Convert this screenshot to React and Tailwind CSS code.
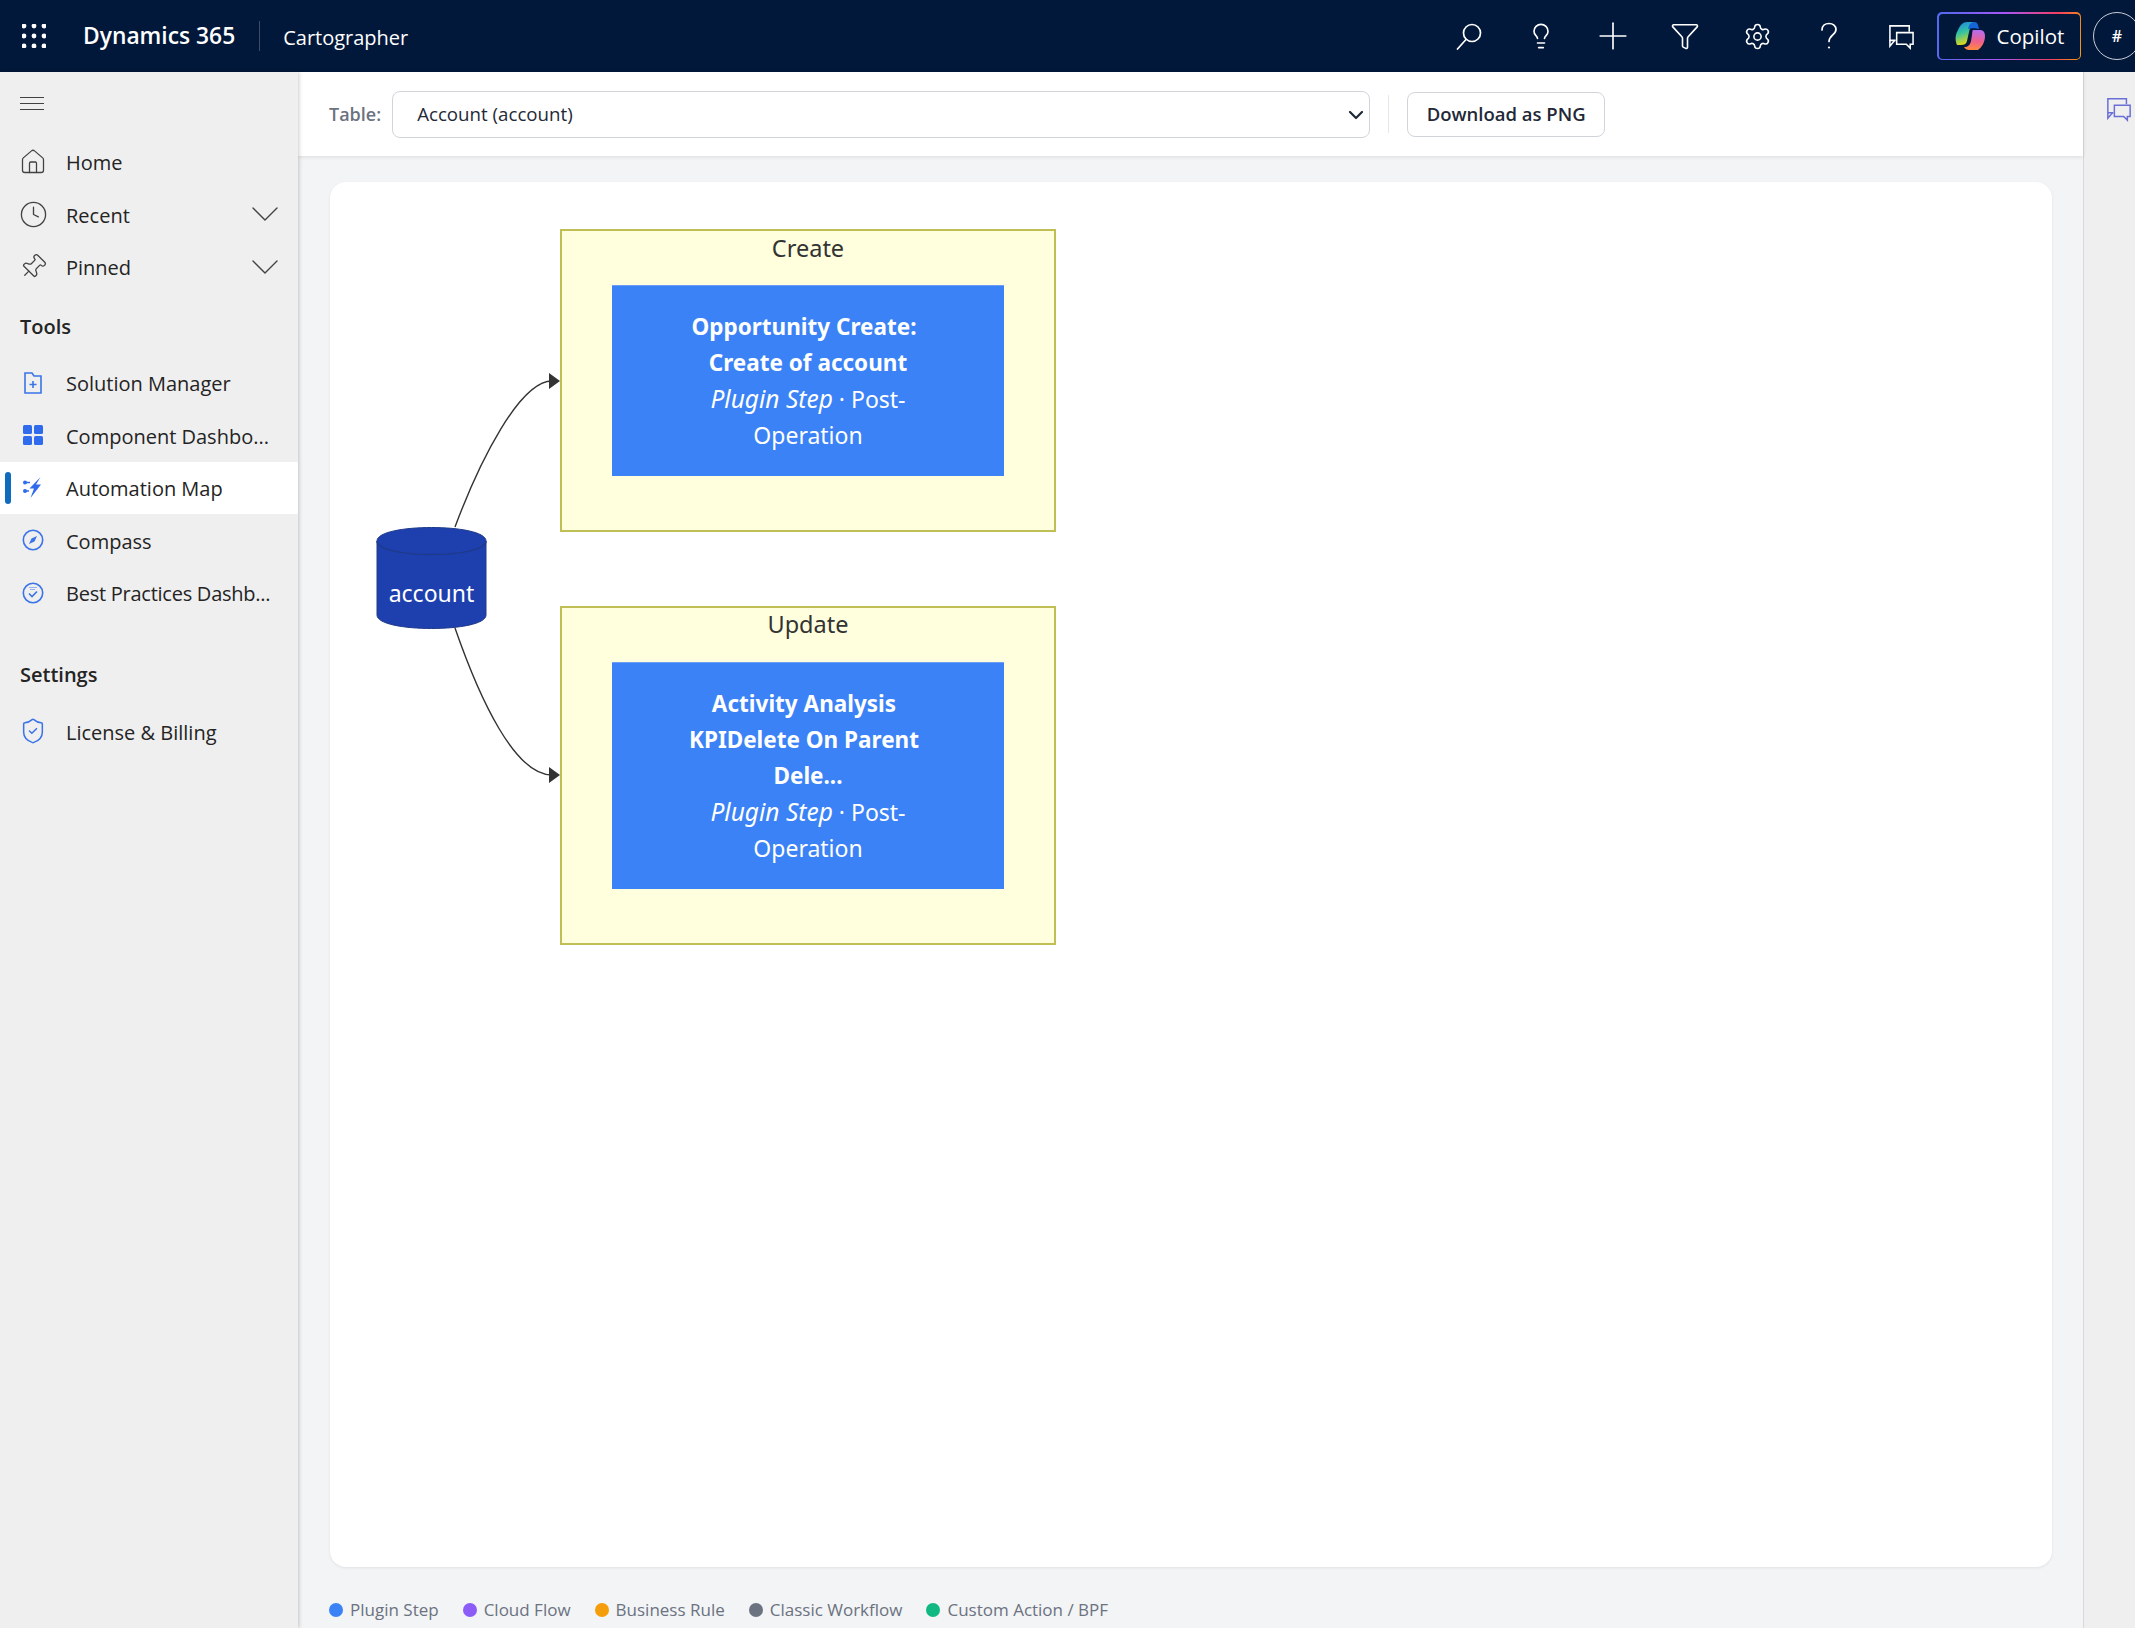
import { House, Clock, Pin, ChevronDown, Lightbulb, Plus, Funnel, Settings, ShieldCheck } from "lucide-react";

const LEGEND = [
  { label: "Plugin Step", dot: "bg-[#3b82f6]" },
  { label: "Cloud Flow", dot: "bg-[#8b5cf6]" },
  { label: "Business Rule", dot: "bg-[#f59e0b]" },
  { label: "Classic Workflow", dot: "bg-[#6b7280]" },
  { label: "Custom Action / BPF", dot: "bg-[#10b981]" },
];

const Waffle = () => (
  <svg width="24" height="24" viewBox="0 0 24 24" fill="white">
    {[2, 12, 22].map((y) =>
      [2, 12, 22].map((x) => <circle key={`${x}-${y}`} cx={x} cy={y} r="2.4" />)
    )}
  </svg>
);

const SearchIcon = () => (
  <svg width="28" height="28" viewBox="0 0 28 28" fill="none" stroke="white" strokeWidth="1.7">
    <circle cx="17" cy="11" r="8.5" />
    <path d="M11 17.5 2.5 27" strokeLinecap="round" />
  </svg>
);

const QuestionIcon = () => (
  <svg width="22" height="28" viewBox="0 0 22 28" fill="none" stroke="white" strokeWidth="1.7">
    <path d="M4 8c0-4 3-6.5 7-6.5s7 2.5 7 6c0 5-7 6-7 12" strokeLinecap="round" />
    <circle cx="11" cy="25.5" r="1.1" fill="white" stroke="none" />
  </svg>
);

const ChatIcon = ({ color = "white", size = 27 }) => (
  <svg width={size} height={size} viewBox="0 0 28 28" fill="none" stroke={color} strokeWidth="1.6">
    <path d="M8 18H2V3h20v6" />
    <path d="M2 18v6l5-6" />
    <path d="M9 10h17v12h-3v4l-4-4H9z" />
  </svg>
);

const CopilotLogo = () => (
  <svg width="30" height="28" viewBox="0 0 30 28">
    <defs>
      <linearGradient id="cpA" x1="0.2" y1="0" x2="0.5" y2="1">
        <stop offset="0" stopColor="#1e88e5" />
        <stop offset="0.45" stopColor="#34c3a0" />
        <stop offset="1" stopColor="#f5d90a" />
      </linearGradient>
      <linearGradient id="cpB" x1="0.5" y1="0" x2="0.4" y2="1">
        <stop offset="0" stopColor="#b56cf0" />
        <stop offset="0.55" stopColor="#f0608c" />
        <stop offset="1" stopColor="#ff8a3c" />
      </linearGradient>
    </defs>
    <path d="M12 0h8c-3 1-5 5-6 10l-2 9c-.7 3-3 4-6 4H2c-2-5-2-10 1-15 2-5 5-8 9-8z" fill="url(#cpA)" />
    <path d="M20 0c-4 0-6 2-7 7 3-1 8-1 11 0-.5-4-2-7-4-7z" fill="#1565d8" />
    <path d="M18 8h7c3 0 5 2 5 6 0 6-3 11-7 14h-9c-2 0-4-1-5-3 4 0 6-2 7-6l1-6c.3-3 .6-5 1-5z" fill="url(#cpB)" />
  </svg>
);

const SolutionIcon = () => (
  <svg width="20" height="24" viewBox="0 0 20 24" fill="none" stroke="#3b74e8" strokeWidth="1.6">
    <path d="M2 2h7l2 3h7v17H2z" />
    <path d="M10 10v7M6.500 13.500h7" />
  </svg>
);

const ComponentIcon = () => (
  <svg width="20" height="20" viewBox="0 0 20 20" fill="#2f6bed">
    <rect x="0" y="0" width="9" height="9" rx="1.500" />
    <rect x="11" y="0" width="9" height="9" rx="1.500" />
    <rect x="0" y="11" width="9" height="9" rx="1.500" />
    <rect x="11" y="11" width="9" height="9" rx="1.500" />
  </svg>
);

const AutomationIcon = () => (
  <svg width="20" height="21" viewBox="0 0 20 21" fill="#2f6bed">
    <path d="M17.500 0 6.500 11.500H11L7.500 21 18 7.500h-5z" />
    <circle cx="2" cy="5.500" r="2" />
    <circle cx="2" cy="14" r="2" />
    <path d="M3 4.800h4v1.400H3zM3 13.300h3v1.400H3z" />
  </svg>
);

const CompassIcon = () => (
  <svg width="22" height="22" viewBox="0 0 22 22" fill="none" stroke="#3b74e8" strokeWidth="1.6">
    <circle cx="11" cy="11" r="9.700" />
    <path d="M15 7l-2.500 5.500L7 15l2.500-5.500z" fill="#3b74e8" stroke="none" />
  </svg>
);

const BestPracticesIcon = () => (
  <svg width="22" height="22" viewBox="0 0 22 22" fill="none" stroke="#3b74e8" strokeWidth="1.6">
    <circle cx="11" cy="11" r="9.700" />
    <path d="M7 11.500l3 3 5-5" />
    <path d="M7 5.500h8M8 7.500h5" strokeWidth="1" stroke="#93b4f2" />
  </svg>
);

const NavItem = ({ icon, label, chevron, active, tight }) => (
  <div className={`relative flex h-[52.500px] items-center ${active ? "bg-white" : ""}`}>
    {active && <div className="absolute left-[5px] top-[10px] h-[32px] w-[6px] rounded-full bg-[#0f6cbd]" />}
    <div className="flex w-[66px] justify-center">{icon}</div>
    <span className={`pt-[3px] text-[20px] whitespace-nowrap text-[#242424] ${tight ? "tracking-[-0.25px]" : ""}`}>{label}</span>
    {chevron && (
      <ChevronDown className="absolute left-[241px] size-[48px] text-[#424242]" strokeWidth={0.7} />
    )}
  </div>
);

const SectionTitle = ({ children, className }) => (
  <div className={`pl-[20px] text-[20px] font-semibold text-[#242424] ${className}`}>{children}</div>
);

const Sidebar = () => (
  <aside className="z-10 flex w-[298px] shrink-0 flex-col bg-[#efefef] shadow-[1px_0_4px_rgba(0,0,0,0.2)]">
    <div className="flex h-[63.500px] items-center pl-[20px]">
      <div className="flex w-[24px] flex-col gap-[5px]">
        <div className="h-px bg-[#424242]" />
        <div className="h-px bg-[#424242]" />
        <div className="h-px bg-[#424242]" />
      </div>
    </div>
    <NavItem icon={<House className="size-[28px] text-[#424242]" strokeWidth={1.1} />} label="Home" />
    <NavItem icon={<Clock className="size-[29px] text-[#424242]" strokeWidth={1.1} />} label="Recent" chevron />
    <NavItem icon={<Pin className="size-[28px] rotate-45 text-[#424242]" strokeWidth={1.1} />} label="Pinned" chevron />
    <SectionTitle className="mt-[19.500px] mb-[16px] h-[28px] leading-[28px]">Tools</SectionTitle>
    <NavItem icon={<SolutionIcon />} label="Solution Manager" />
    <NavItem icon={<ComponentIcon />} label="Component Dashbo..." />
    <NavItem icon={<AutomationIcon />} label="Automation Map" active />
    <NavItem icon={<CompassIcon />} label="Compass" />
    <NavItem icon={<BestPracticesIcon />} label="Best Practices Dashb..." tight />
    <SectionTitle className="mt-[42px] mb-[16px] h-[28px] leading-[28px]">Settings</SectionTitle>
    <NavItem icon={<ShieldCheck className="size-[28px] text-[#3b74e8]" strokeWidth={1.3} />} label="License & Billing" />
  </aside>
);

const Header = () => (
  <header className="flex h-[72px] shrink-0 items-center bg-[#02183a] text-white">
    <div className="ml-[22px]"><Waffle /></div>
    <div className="ml-[37px] text-[22.800px] font-semibold">Dynamics 365</div>
    <div className="ml-[24px] h-[30px] w-px bg-[#3d4c66]" />
    <div className="ml-[23px] pt-[4px] text-[20px]">Cartographer</div>
    <div className="ml-auto flex items-center">
      <div className="flex h-[48px] w-[72px] items-center justify-center"><SearchIcon /></div>
      <div className="flex h-[48px] w-[72px] items-center justify-center"><Lightbulb className="size-[28px]" strokeWidth={1.4} /></div>
      <div className="flex h-[48px] w-[72px] items-center justify-center"><Plus className="size-[44px]" strokeWidth={0.9} /></div>
      <div className="flex h-[48px] w-[72px] items-center justify-center"><Funnel className="size-[30px]" strokeWidth={1.3} /></div>
      <div className="flex h-[48px] w-[72px] items-center justify-center"><Settings className="size-[29px]" strokeWidth={1.3} /></div>
      <div className="flex h-[48px] w-[72px] items-center justify-center"><QuestionIcon /></div>
      <div className="flex h-[48px] w-[72px] items-center justify-center"><ChatIcon /></div>
      <div className="h-[48px] w-[144px] rounded-[5px] bg-[linear-gradient(100deg,#4f6bed,#a855f7_45%,#f43f5e_80%,#f59e0b)] p-[1.500px]">
        <div className="flex h-full items-center gap-[12px] rounded-[4px] bg-[#02183a] pl-[16px]">
          <CopilotLogo />
          <span className="text-[20.500px]">Copilot</span>
        </div>
      </div>
      <div className="-mr-[6px] ml-[12px] flex size-[48px] shrink-0 items-center justify-center rounded-full border border-[#c8ccd4] text-[16px] font-semibold">#</div>
    </div>
  </header>
);

const Toolbar = () => (
  <div className="z-[1] flex h-[84px] shrink-0 items-center bg-white pl-[31px] shadow-[0_1px_4px_rgba(0,0,0,0.1)]">
    <span className="text-[18px] font-semibold text-[#6b7280]">Table:</span>
    <div className="relative ml-[11px]">
      <select className="block h-[47px] w-[978px] appearance-none rounded-[8px] border border-[#d1d5db] bg-white pl-[24px] text-[18.700px] text-[#1f2937] outline-none">
        <option>Account (account)</option>
      </select>
      <ChevronDown className="absolute top-[12px] right-[2px] size-[24px] text-[#1f2937]" strokeWidth={2.2} />
    </div>
    <div className="ml-[18px] h-[38px] w-px bg-[#e5e7eb]" />
    <button className="ml-[18px] h-[45px] w-[198px] rounded-[8px] border border-[#d1d5db] bg-white text-[18.500px] font-semibold text-[#1f2937]">
      Download as PNG
    </button>
  </div>
);

// mermaid-ish label block, lines are positioned by the node's flow
const NodeLabel = ({ lines, className }) => (
  <div className={`absolute left-[612px] flex w-[392px] flex-col items-center justify-center border-t border-[#6b9cf7] bg-[#3b82f6] text-[23px] leading-[36px] text-white ${className}`}>
    {lines.map((l, i) => (
      <div key={i} className={`${l.bold ? "text-[22.500px] font-bold" : ""} ${l.shift ? "pr-[8px]" : ""}`}>
        {l.italic && <em className="text-[24.500px]">{l.italic}</em>}
        {l.italic ? " · " : ""}
        {l.text}
      </div>
    ))}
  </div>
);

const Diagram = () => (
  <div className="absolute inset-0 font-['Noto_Sans',sans-serif]">
    <svg className="absolute inset-0" width="2135" height="1628" fill="none">
      <path d="M455 527C480 460 520 381 552 381" stroke="#333" strokeWidth="1.400" />
      <path d="M455 628C480 700 515 775 552 775" stroke="#333" strokeWidth="1.400" />
      <path d="M549 373l11 8-11 8zM549 767l11 8-11 8z" fill="#333" />
      <path d="M377 541c0-18 109-18 109 0v74c0 18-109 18-109 0z" fill="#1e40af" stroke="#1e3a8a" />
      <path d="M377 541c0 18 109 18 109 0" stroke="#1e3a8a" strokeWidth="1.500" />
    </svg>
    <div className="absolute left-[377px] top-[575px] w-[109px] text-center text-[23px] leading-[36px] text-white">account</div>

    <div className="absolute left-[560px] top-[229px] h-[303px] w-[496px] border-2 border-[#bfbf56] bg-[#ffffde] text-center text-[23.500px] leading-[34px] text-[#333]">Create</div>
    <NodeLabel
      className="top-[285px] h-[191px]"
      lines={[
        { text: "Opportunity Create:", bold: true, shift: true },
        { text: "Create of account", bold: true },
        { italic: "Plugin Step", text: "Post-" },
        { text: "Operation" },
      ]}
    />

    <div className="absolute left-[560px] top-[606px] h-[339px] w-[496px] border-2 border-[#bfbf56] bg-[#ffffde] text-center text-[23.500px] leading-[33px] text-[#333]">Update</div>
    <NodeLabel
      className="top-[662px] h-[227px]"
      lines={[
        { text: "Activity Analysis", bold: true, shift: true },
        { text: "KPIDelete On Parent", bold: true, shift: true },
        { text: "Dele...", bold: true },
        { italic: "Plugin Step", text: "Post-" },
        { text: "Operation" },
      ]}
    />
  </div>
);

const Legend = () => (
  <div className="flex h-[61px] items-center pt-[24px] pl-[31px] text-[17px] text-[#6b7280]">
    {LEGEND.map((item) => (
      <div key={item.label} className="mr-[24px] flex items-center gap-[7px]">
        <span className={`size-[14px] rounded-full ${item.dot}`} />
        {item.label}
      </div>
    ))}
  </div>
);

export default function App() {
  return (
    <div className="relative flex h-[1628px] w-[2135px] flex-col overflow-hidden bg-[#f3f4f6] font-['Open_Sans',sans-serif]">
      <Header />
      <div className="flex min-h-0 flex-1">
        <Sidebar />
        <main className="flex min-w-0 flex-1 flex-col">
          <Toolbar />
          <div className="flex-1 pl-[32px] pr-[31px] pt-[26px]">
            <div className="h-[1385px] rounded-[16px] bg-white shadow-[0_1px_3px_rgba(0,0,0,0.08)]" />
          </div>
          <Legend />
        </main>
        <div className="flex w-[52px] shrink-0 justify-center border-l border-[#d8d8d8] bg-[#efefef] pt-[24px] pl-[18px]">
          <ChatIcon color="#6a6fd8" size={26} />
        </div>
      </div>
      <Diagram />
    </div>
  );
}
